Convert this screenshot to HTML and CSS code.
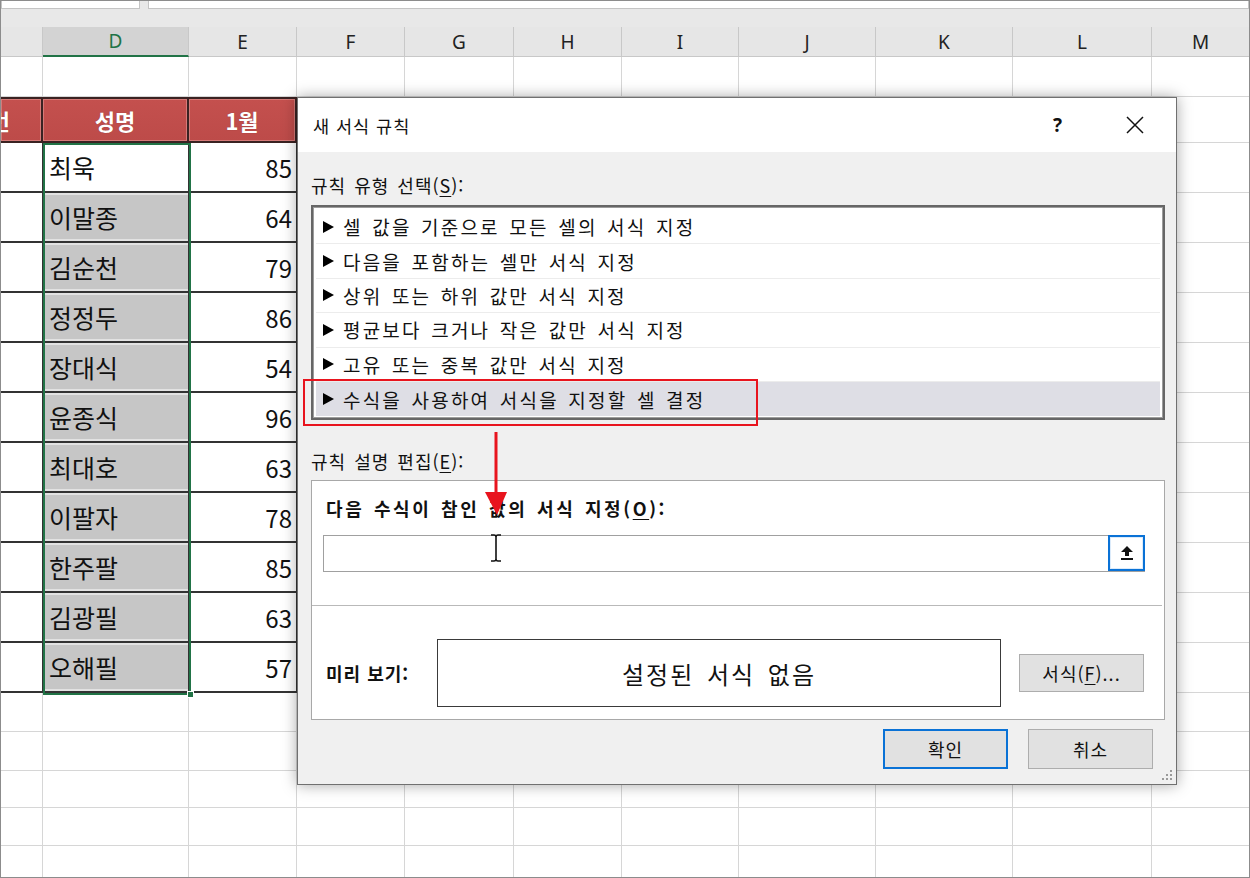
FILE: index.html
```html
<!DOCTYPE html>
<html lang="ko">
<head>
    <meta charset="UTF-8">
    <title>새 서식 규칙</title>
    <link rel="stylesheet" href="styles.css">
</head>
<body>
<div class="screen">

    <!-- Formula bar strip -->
    <div class="formula-strip">
        <div class="name-box"></div>
        <div class="formula-box"></div>
    </div>

    <!-- Column headers -->
    <div class="row col-heads">
        <div></div><div class="active">D</div><div>E</div><div>F</div><div>G</div><div>H</div><div>I</div><div>J</div><div>K</div><div>L</div><div>M</div>
    </div>

    <!-- Sheet rows -->
    <div class="row blank-top"><div></div><div></div><div></div><div></div><div></div><div></div><div></div><div></div><div></div><div></div><div></div></div>

    <div class="row table-head">
        <div class="th cut"><span>학번</span></div><div class="th">성명</div><div class="th">1월</div><div class="th"></div><div class="th"></div><div class="th"></div><div class="th"></div><div></div><div></div><div></div><div></div>
    </div>

    <div class="row data"><div class="t"></div><div class="t name plain">최욱</div><div class="t num">85</div><div class="t"></div><div class="t"></div><div class="t"></div><div class="t"></div><div></div><div></div><div></div><div></div></div>
    <div class="row data"><div class="t"></div><div class="t name">이말종</div><div class="t num">64</div><div class="t"></div><div class="t"></div><div class="t"></div><div class="t"></div><div></div><div></div><div></div><div></div></div>
    <div class="row data"><div class="t"></div><div class="t name">김순천</div><div class="t num">79</div><div class="t"></div><div class="t"></div><div class="t"></div><div class="t"></div><div></div><div></div><div></div><div></div></div>
    <div class="row data"><div class="t"></div><div class="t name">정정두</div><div class="t num">86</div><div class="t"></div><div class="t"></div><div class="t"></div><div class="t"></div><div></div><div></div><div></div><div></div></div>
    <div class="row data"><div class="t"></div><div class="t name">장대식</div><div class="t num">54</div><div class="t"></div><div class="t"></div><div class="t"></div><div class="t"></div><div></div><div></div><div></div><div></div></div>
    <div class="row data"><div class="t"></div><div class="t name">윤종식</div><div class="t num">96</div><div class="t"></div><div class="t"></div><div class="t"></div><div class="t"></div><div></div><div></div><div></div><div></div></div>
    <div class="row data"><div class="t"></div><div class="t name">최대호</div><div class="t num">63</div><div class="t"></div><div class="t"></div><div class="t"></div><div class="t"></div><div></div><div></div><div></div><div></div></div>
    <div class="row data"><div class="t"></div><div class="t name">이팔자</div><div class="t num">78</div><div class="t"></div><div class="t"></div><div class="t"></div><div class="t"></div><div></div><div></div><div></div><div></div></div>
    <div class="row data"><div class="t"></div><div class="t name">한주팔</div><div class="t num">85</div><div class="t"></div><div class="t"></div><div class="t"></div><div class="t"></div><div></div><div></div><div></div><div></div></div>
    <div class="row data"><div class="t"></div><div class="t name">김광필</div><div class="t num">63</div><div class="t"></div><div class="t"></div><div class="t"></div><div class="t"></div><div></div><div></div><div></div><div></div></div>
    <div class="row data"><div class="t"></div><div class="t name">오해필</div><div class="t num">57</div><div class="t"></div><div class="t"></div><div class="t"></div><div class="t"></div><div></div><div></div><div></div><div></div></div>

    <div class="row empty h39"><div></div><div></div><div></div><div></div><div></div><div></div><div></div><div></div><div></div><div></div><div></div></div>
    <div class="row empty h39"><div></div><div></div><div></div><div></div><div></div><div></div><div></div><div></div><div></div><div></div><div></div></div>
    <div class="row empty h37"><div></div><div></div><div></div><div></div><div></div><div></div><div></div><div></div><div></div><div></div><div></div></div>
    <div class="row empty h38"><div></div><div></div><div></div><div></div><div></div><div></div><div></div><div></div><div></div><div></div><div></div></div>
    <div class="row empty h38"><div></div><div></div><div></div><div></div><div></div><div></div><div></div><div></div><div></div><div></div><div></div></div>

    <!-- Selection around D column -->
    <div class="selection"><span class="fill-handle"></span></div>

    <!-- Dialog -->
    <div class="dialog">
        <div class="dlg-title">
            <span>새 서식 규칙</span>
            <div class="title-btns">
                <span class="help">?</span>
                <span class="close">
                    <svg width="20" height="20" viewBox="0 0 20 20"><path d="M2 2 L18 18 M18 2 L2 18" stroke="#111" stroke-width="1.5"/></svg>
                </span>
            </div>
        </div>

        <div class="dlg-body">
            <div class="label">규칙 유형 선택(<u>S</u>):</div>
            <div class="rule-list">
                <div class="item">셀 값을 기준으로 모든 셀의 서식 지정</div>
                <div class="item">다음을 포함하는 셀만 서식 지정</div>
                <div class="item">상위 또는 하위 값만 서식 지정</div>
                <div class="item">평균보다 크거나 작은 값만 서식 지정</div>
                <div class="item">고유 또는 중복 값만 서식 지정</div>
                <div class="item selected">수식을 사용하여 서식을 지정할 셀 결정</div>
            </div>

            <div class="label second">규칙 설명 편집(<u>E</u>):</div>
            <div class="panel">
                <div class="panel-label">다음 수식이 참인 값의 서식 지정(<u>O</u>):</div>
                <div class="formula-input">
                    <span class="ref-btn">
                        <svg width="18" height="18" viewBox="0 0 18 18"><path d="M9 2 L15 8 H11 V12 H7 V8 H3 Z" fill="#111"/><rect x="3" y="14" width="12" height="2" fill="#111"/></svg>
                    </span>
                </div>
                <div class="divider"></div>
                <div class="preview-row">
                    <div class="preview-label">미리 보기:</div>
                    <div class="preview-box">설정된 서식 없음</div>
                    <button class="btn format-btn">서식(<u>F</u>)...</button>
                </div>
            </div>

            <div class="actions">
                <button class="btn ok">확인</button>
                <button class="btn">취소</button>
            </div>
        </div>

        <svg class="grip" width="14" height="14" viewBox="0 0 14 14">
            <rect x="10" y="2" width="2" height="2" fill="#9a9a9a"/>
            <rect x="6" y="6" width="2" height="2" fill="#9a9a9a"/><rect x="10" y="6" width="2" height="2" fill="#9a9a9a"/>
            <rect x="2" y="10" width="2" height="2" fill="#9a9a9a"/><rect x="6" y="10" width="2" height="2" fill="#9a9a9a"/><rect x="10" y="10" width="2" height="2" fill="#9a9a9a"/>
        </svg>
    </div>

    <!-- Annotations over the dialog -->
    <div class="highlight"></div>
    <svg class="arrow" width="30" height="84" viewBox="0 0 30 84">
        <path d="M15 0 V64" stroke="#e8141e" stroke-width="3"/>
        <path d="M4 60 L26 60 L16 83 Z" fill="#e8141e"/>
    </svg>
    <svg class="ibeam" width="14" height="28" viewBox="0 0 14 28">
        <path d="M2 1 H5 Q7 1 7 3 Q7 1 9 1 H12 M7 3 V25 M2 27 H5 Q7 27 7 25 Q7 27 9 27 H12" stroke="#111" stroke-width="1.6" fill="none"/>
    </svg>
</div>
</body>
</html>
```

FILE: styles.css
```css
* {
    box-sizing: border-box;
}

html, body {
    margin: 0;
    padding: 0;
}

body {
    width: 1250px;
    height: 878px;
    overflow: hidden;
    font-family: "Noto Sans CJK KR", "Noto Sans", sans-serif;
    background: #fff;
    color: #111;
}

.screen {
    position: relative;
    width: 1250px;
    height: 878px;
    border: 1px solid #8c8c8c;
    overflow: hidden;
    background: #fff;
}

/* Formula bar strip */
.formula-strip {
    display: flex;
    gap: 8px;
    height: 26px;
    background: #e8e8e8;
}

.name-box,
.formula-box {
    height: 8px;
    background: #fff;
    border: 1px solid #c4c4c4;
    border-top: none;
}

.name-box {
    width: 139px;
}

.formula-box {
    flex: 1;
}

/* Sheet grid */
.row {
    display: grid;
    grid-template-columns: 42px 146px 108px 108px 109px 108px 117px 137px 137px 139px 98px;
}

.row > div {
    border-right: 1px solid #d6d6d6;
    border-bottom: 1px solid #d6d6d6;
    display: flex;
    align-items: center;
    overflow: hidden;
    white-space: nowrap;
}

.col-heads {
    height: 30px;
    background: #e6e6e6;
    font-family: "Noto Sans", sans-serif;
    font-size: 19px;
    color: #222;
}

.col-heads > div {
    justify-content: center;
    border-right: 1px solid #c8c8c8;
    border-bottom: 1px solid #c8c8c8;
}

.col-heads > div.active {
    background: #d3d3d3;
    color: #217346;
    border-bottom: 2px solid #217346;
}

.blank-top {
    height: 40px;
}

.table-head {
    height: 46px;
}

.table-head > div.th {
    background: linear-gradient(180deg, #c4504e, #bd4b49);
    color: #fff;
    font-weight: bold;
    font-size: 22px;
    justify-content: center;
    border-right: 2px solid #3a2222;
    border-top: 2px solid #3a2222;
    border-bottom: 2px solid #3a2222;
    box-shadow: inset 0 0 0 1px #d67a78;
    text-shadow: 0 0 1px rgba(0, 0, 0, 0.3);
}

.table-head > div.cut {
    justify-content: flex-end;
    padding-right: 31px;
}

.data {
    height: 50px;
}

.data > div.t {
    border-right: 1px solid #333;
    border-bottom: 2px solid #333;
}

.data > .name {
    font-size: 25px;
    padding-left: 6px;
    background: #c6c6c6;
    box-shadow: inset 0 -2px 0 #e2e2e2, inset 0 2px 0 #e2e2e2;
}

.data > .name.plain {
    background: #fff;
    box-shadow: none;
}

.data > .num {
    font-size: 24px;
    justify-content: flex-end;
    padding-right: 4px;
}

.h39 { height: 39px; }
.h38 { height: 38px; }
.h37 { height: 37px; }

.selection {
    position: absolute;
    left: 42px;
    top: 142px;
    width: 148px;
    height: 552px;
    border: 2px solid #217346;
}

.fill-handle {
    position: absolute;
    right: -5px;
    bottom: -5px;
    width: 7px;
    height: 7px;
    background: #217346;
    border: 1px solid #fff;
}

/* Dialog */
.dialog {
    position: absolute;
    left: 296px;
    top: 96px;
    width: 880px;
    height: 688px;
    border: 1px solid #707070;
    background: #f0f0f0;
    box-shadow: 0 0 14px rgba(0, 0, 0, 0.35);
    display: flex;
    flex-direction: column;
    font-size: 18px;
    letter-spacing: 1px;
}

.dlg-title {
    height: 54px;
    background: #fff;
    display: flex;
    align-items: center;
    padding-left: 15px;
    font-size: 17.5px;
}

.title-btns {
    margin-left: auto;
    display: flex;
    align-items: center;
    gap: 31px;
    padding-right: 18px;
}

.title-btns span {
    width: 46px;
    display: flex;
    justify-content: center;
}

.help {
    font-size: 19px;
    font-weight: bold;
    font-family: "Noto Sans", sans-serif;
}

.dlg-body {
    flex: 1;
    padding: 0 11px 0 13px;
    display: flex;
    flex-direction: column;
    position: relative;
}

.label {
    margin-top: 21px;
    line-height: 24px;
    word-spacing: 2px;
}

.label.second {
    margin-top: 29px;
}

u {
    text-decoration-thickness: 1px;
    text-underline-offset: 3px;
}

.rule-list {
    margin-top: 8px;
    height: 215px;
    background: #fff;
    border: 2px solid #666;
    box-shadow: inset 0 0 0 1px #9c9c9c;
    padding: 3px 3px 0;
}

.item {
    height: 34.4px;
    display: flex;
    align-items: center;
    padding-left: 7px;
    border-bottom: 1px solid #ececec;
    font-size: 19px;
    letter-spacing: 2.2px;
    word-spacing: 2px;
}

.item::before {
    content: "";
    border-left: 11px solid #000;
    border-top: 6px solid transparent;
    border-bottom: 6px solid transparent;
    margin-right: 9px;
}

.item.selected {
    background: #dedee5;
    border-bottom: none;
}

.panel {
    margin-top: 7px;
    height: 240px;
    background: #fff;
    border: 1px solid #a8a8a8;
    display: flex;
    flex-direction: column;
}

.panel-label {
    margin-top: 15px;
    padding-left: 14px;
    line-height: 24px;
    font-weight: bold;
    letter-spacing: 2.6px;
    word-spacing: 2px;
}

.formula-input {
    margin: 15px 0 0 11px;
    width: 822px;
    height: 37px;
    border: 1px solid #a0a0a0;
    display: flex;
    justify-content: flex-end;
}

.ref-btn {
    width: 37px;
    height: 36px;
    margin: -1px -1px 0 0;
    border: 2px solid #0a72d6;
    box-shadow: inset 0 0 0 1px #dcebfa;
    display: flex;
    align-items: center;
    justify-content: center;
    background: #fff;
}

.divider {
    margin: 33px 2px 0 0;
    height: 1px;
    background: #b9b9b9;
}

.preview-row {
    margin-top: 33px;
    display: flex;
    align-items: center;
}

.preview-label {
    width: 125px;
    padding-left: 14px;
    font-weight: bold;
}

.preview-box {
    width: 564px;
    height: 68px;
    border: 1px solid #3a3a3a;
    display: flex;
    align-items: center;
    justify-content: center;
    font-size: 24px;
    letter-spacing: 2px;
    word-spacing: 4px;
}

.btn {
    width: 125px;
    height: 40px;
    background: #e1e1e1;
    border: 1px solid #adadad;
    font-family: inherit;
    font-size: 18px;
    letter-spacing: 1px;
    color: #111;
    padding: 0;
}

.format-btn {
    margin-left: 18px;
    height: 38px;
}

.actions {
    margin-top: 9px;
    display: flex;
    justify-content: flex-end;
    gap: 20px;
    padding-right: 12px;
}

.btn.ok {
    border: 2px solid #0a72d6;
}

.grip {
    position: absolute;
    right: 2px;
    bottom: 2px;
}

/* Annotations */
.highlight {
    position: absolute;
    left: 302px;
    top: 378px;
    width: 455px;
    height: 47px;
    border: 2px solid #e8141e;
}

.arrow {
    position: absolute;
    left: 480px;
    top: 431px;
}

.ibeam {
    position: absolute;
    left: 488px;
    top: 533px;
}
```
